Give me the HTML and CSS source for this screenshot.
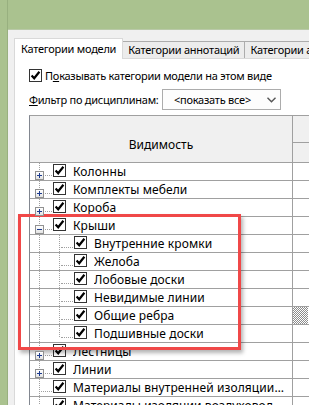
FILE: index.html
```html
<!DOCTYPE html>
<html lang="ru">
<head>
  <meta charset="UTF-8" />
  <title>Видимость/графика</title>
  <meta name="viewport" content="width=device-width, initial-scale=1.0" />
  <link rel="stylesheet" href="styles.css">
</head>
<body>
  <svg class="defs" width="0" height="0" aria-hidden="true">
    <symbol id="chk" viewBox="0 0 13 13">
      <rect x="0.5" y="0.5" width="12" height="12" fill="#fff" stroke="#333"/>
      <path d="M2.6 6.4 L5.2 9.2 L10.4 2.8" fill="none" stroke="#000" stroke-width="2.2"/>
    </symbol>
  </svg>

  <div class="frame">
    <div class="dialog">
      <div class="tabs">
        <div class="tab active">Категории модели</div>
        <div class="tab">Категории аннотаций</div>
        <div class="tab">Категории аналитической модели</div>
      </div>

      <div class="panel">
        <label class="show-row">
          <svg class="cb"><use href="#chk"/></svg>
          <span>П<u>о</u>казывать категории модели на этом виде</span>
        </label>

        <div class="filter-row">
          <span class="filter-label"><u>Ф</u>ильтр по дисциплинам:</span>
          <div class="select">
            <span>&lt;показать все&gt;</span>
            <svg class="chevron" width="9" height="6" viewBox="0 0 9 6"><path d="M0.5 0.8 L4.5 4.8 L8.5 0.8" fill="none" stroke="#555" stroke-width="1.4"/></svg>
          </div>
        </div>

        <div class="grid">
          <div class="grid-head">
            <div class="head-name">Видимость</div>
            <div class="head-vis">
              <div class="head-top"></div>
              <div class="head-bottom"></div>
            </div>
          </div>

          <div class="row">
            <div class="name"><span class="twig branch"><span class="exp plus"></span></span><svg class="cb"><use href="#chk"/></svg><span class="label">Колонны</span></div>
            <div class="vis"></div>
          </div>
          <div class="row">
            <div class="name"><span class="twig branch"><span class="exp plus"></span></span><svg class="cb"><use href="#chk"/></svg><span class="label">Комплекты мебели</span></div>
            <div class="vis"></div>
          </div>
          <div class="row">
            <div class="name"><span class="twig branch"><span class="exp plus"></span></span><svg class="cb"><use href="#chk"/></svg><span class="label">Короба</span></div>
            <div class="vis"></div>
          </div>
          <div class="row">
            <div class="name"><span class="twig branch"><span class="exp"></span></span><svg class="cb"><use href="#chk"/></svg><span class="label">Крыши</span></div>
            <div class="vis"></div>
          </div>
          <div class="row">
            <div class="name"><span class="twig"></span><span class="twig sub branch"></span><svg class="cb"><use href="#chk"/></svg><span class="label">Внутренние кромки</span></div>
            <div class="vis"></div>
          </div>
          <div class="row">
            <div class="name"><span class="twig"></span><span class="twig sub branch"></span><svg class="cb"><use href="#chk"/></svg><span class="label">Желоба</span></div>
            <div class="vis"></div>
          </div>
          <div class="row">
            <div class="name"><span class="twig"></span><span class="twig sub branch"></span><svg class="cb"><use href="#chk"/></svg><span class="label">Лобовые доски</span></div>
            <div class="vis"></div>
          </div>
          <div class="row">
            <div class="name"><span class="twig"></span><span class="twig sub branch"></span><svg class="cb"><use href="#chk"/></svg><span class="label">Невидимые линии</span></div>
            <div class="vis"></div>
          </div>
          <div class="row">
            <div class="name"><span class="twig"></span><span class="twig sub branch"></span><svg class="cb"><use href="#chk"/></svg><span class="label">Общие ребра</span></div>
            <div class="vis mixed"></div>
          </div>
          <div class="row">
            <div class="name"><span class="twig"></span><span class="twig sub branch end"></span><svg class="cb"><use href="#chk"/></svg><span class="label">Подшивные доски</span></div>
            <div class="vis"></div>
          </div>
          <div class="row">
            <div class="name"><span class="twig branch"><span class="exp plus"></span></span><svg class="cb"><use href="#chk"/></svg><span class="label">Лестницы</span></div>
            <div class="vis"></div>
          </div>
          <div class="row">
            <div class="name"><span class="twig branch"><span class="exp plus"></span></span><svg class="cb"><use href="#chk"/></svg><span class="label">Линии</span></div>
            <div class="vis"></div>
          </div>
          <div class="row">
            <div class="name"><span class="twig branch"></span><svg class="cb"><use href="#chk"/></svg><span class="label">Материалы внутренней изоляции воздуховодов</span></div>
            <div class="vis"></div>
          </div>
          <div class="row">
            <div class="name"><span class="twig branch"></span><svg class="cb"><use href="#chk"/></svg><span class="label">Материалы изоляции воздуховодов</span></div>
            <div class="vis"></div>
          </div>
        </div>
      </div>
    </div>
  </div>

  <div class="callout"></div>
</body>
</html>
```

FILE: styles.css
```css
body {
  margin: 0;
  height: 100vh;
  overflow: hidden;
  background: #aac28f;
  color: #000;
  font-family: "Noto Sans", sans-serif;
  font-size: 11px;
  letter-spacing: -0.25px;
}
.defs {
  position: absolute;
}
.frame {
  margin-left: 7px;
  height: 100vh;
  padding-top: 29px;
  box-sizing: border-box;
  border-left: 1px solid #98b07f;
}
.dialog {
  width: 420px;
  height: 100%;
  padding: 8px 0 0 6px;
  box-sizing: border-box;
  background: #f0f0f0;
  border-top: 1px solid #b9c9a8;
  display: flex;
  flex-direction: column;
}
.tabs {
  display: flex;
  align-items: flex-end;
  height: 20px;
  white-space: nowrap;
}
.tab {
  height: 17px;
  box-sizing: border-box;
  padding: 0 5px;
  line-height: 16px;
  background: #ececec;
  border: 1px solid #acacac;
  border-bottom: none;
  border-left: none;
}
.tab.active {
  height: 21px;
  margin-bottom: -1px;
  padding: 0 6px;
  line-height: 19px;
  background: #fff;
  border: 1px solid #d9d9d9;
  border-bottom: none;
  position: relative;
}
.panel {
  flex: 1;
  background: #fff;
  border: 1px solid #d9d9d9;
  display: flex;
  flex-direction: column;
}
.show-row {
  display: flex;
  align-items: center;
  gap: 3px;
  margin: 10px 0 0 14px;
  height: 13px;
  white-space: nowrap;
}
.cb {
  width: 13px;
  height: 13px;
  flex: none;
}
.filter-row {
  display: flex;
  align-items: center;
  margin: 7px 0 0 14px;
  height: 21px;
  white-space: nowrap;
}
.filter-label {
  width: 133px;
}
.select {
  width: 119px;
  height: 21px;
  box-sizing: border-box;
  border: 1px solid #acacac;
  background: #fdfdfd;
  display: flex;
  align-items: center;
  justify-content: space-between;
  padding: 0 4px 0 11px;
}
.grid {
  margin: 5px 0 0 14px;
  border-top: 1px solid #a0a0a0;
  border-left: 1px solid #828790;
}
.grid-head {
  display: flex;
  height: 46px;
  background: #f0f0f0;
  border-bottom: 1px solid #a0a0a0;
}
.head-name {
  width: 263px;
  box-sizing: border-box;
  border-right: 1px solid #a0a0a0;
  display: flex;
  justify-content: center;
  align-items: center;
  padding-top: 10px;
  font-size: 12px;
  letter-spacing: 0;
}
.head-vis {
  width: 80px;
  display: flex;
  flex-direction: column;
}
.head-top {
  height: 26px;
  border-bottom: 1px solid #a0a0a0;
}
.row {
  display: flex;
  height: 18px;
  box-sizing: border-box;
  border-bottom: 1px solid #a0a0a0;
  font-size: 12px;
  letter-spacing: 0.1px;
}
.name {
  width: 263px;
  box-sizing: border-box;
  border-right: 1px solid #a0a0a0;
  display: flex;
  align-items: center;
  padding-right: 6px;
}
.name .cb {
  margin: 0 7px 2px 0;
}
.label {
  flex: 1;
  min-width: 0;
  white-space: nowrap;
  overflow: hidden;
  text-overflow: ellipsis;
}
.vis {
  width: 80px;
}
.vis.mixed {
  background-image: conic-gradient(#8c8c8c 25%, #fff 0 50%, #8c8c8c 0 75%, #fff 0);
  background-size: 2px 2px;
  width: 15px;
}

/* tree connectors */
.twig {
  flex: none;
  align-self: stretch;
  width: 23px;
  position: relative;
}
.twig::before {
  content: "";
  position: absolute;
  left: 9px;
  top: 0;
  bottom: 0;
  border-left: 1px dotted #a0a0a0;
}
.twig.branch::after {
  content: "";
  position: absolute;
  left: 11px;
  right: 1px;
  top: 12px;
  border-top: 1px dotted #a0a0a0;
}
.twig.sub {
  width: 21px;
}
.twig.sub::before {
  left: 6px;
}
.twig.sub::after {
  left: 8px;
}
.twig.end::before {
  bottom: auto;
  height: 12px;
}
.exp {
  position: absolute;
  left: 5px;
  top: 8px;
  width: 9px;
  height: 9px;
  box-sizing: border-box;
  border: 1px solid #919191;
  background: linear-gradient(#fff, #e3e3e3);
  z-index: 1;
}
.exp::before,
.exp.plus::after {
  content: "";
  position: absolute;
  background: #1c3b8f;
}
.exp::before {
  left: 1px;
  top: 3px;
  width: 5px;
  height: 1px;
}
.exp.plus::after {
  left: 3px;
  top: 1px;
  width: 1px;
  height: 5px;
}

.callout {
  position: absolute;
  left: 18px;
  top: 214px;
  width: 223px;
  height: 136px;
  box-sizing: border-box;
  border: 3px solid #f04848;
  box-shadow: 2px 3px 4px rgba(0, 0, 0, 0.3);
}
```
